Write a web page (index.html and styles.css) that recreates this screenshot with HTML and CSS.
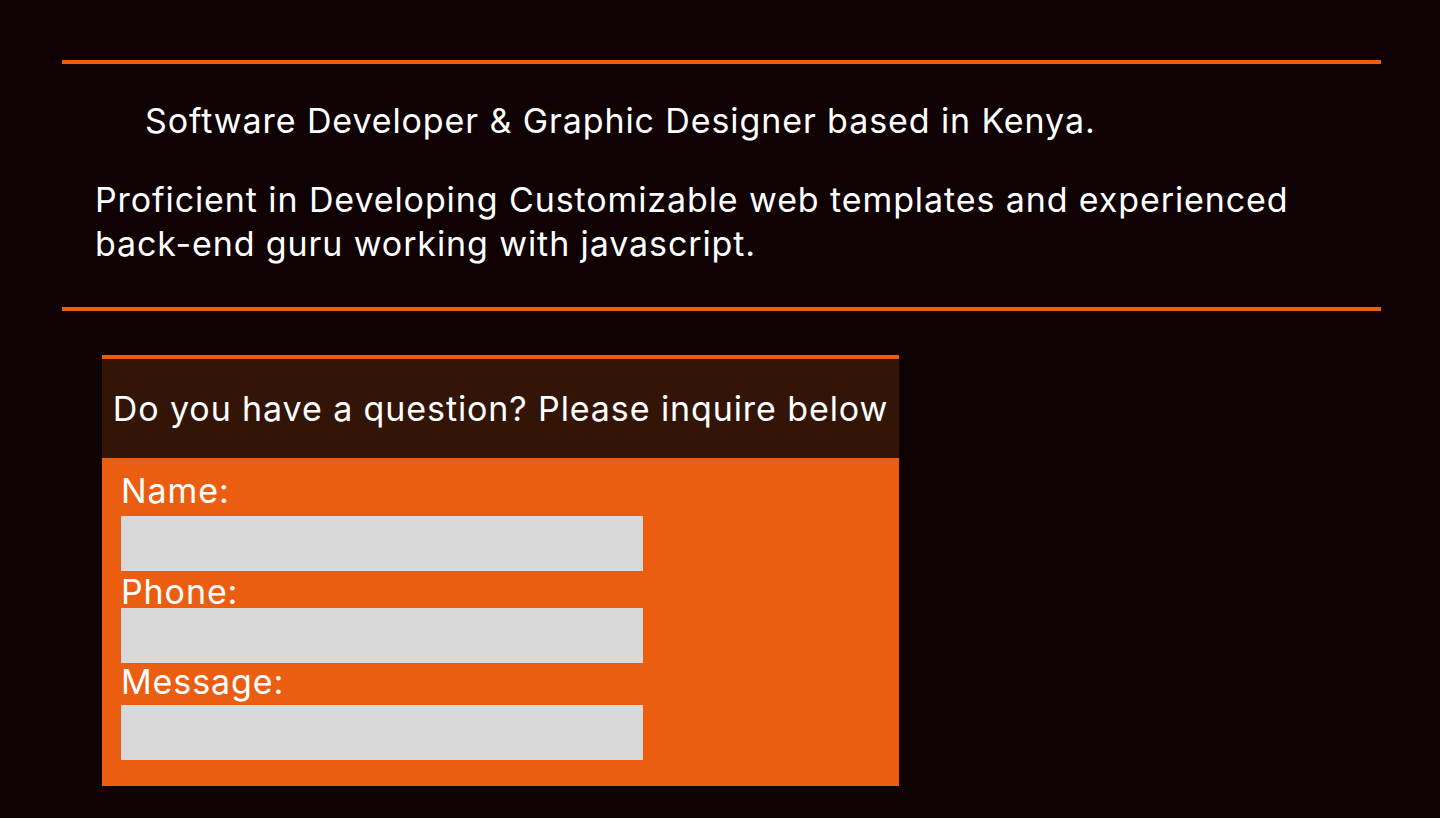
FILE: index.html
```html
<!DOCTYPE html>
<html lang="en">
<head>
<meta charset="utf-8">
<title>Portfolio</title>
<link rel="stylesheet" href="styles.css">
</head>
<body>
<main class="page">
  <hr class="rule">
  <section class="intro">
    <p class="tagline">Software Developer &amp; Graphic Designer based in Kenya.</p>
    <p class="bio">Proficient in Developing Customizable web templates and experienced back-end guru working with javascript.</p>
  </section>
  <hr class="rule">
  <form class="inquiry">
    <h2 class="inquiry-title">Do you have a question? Please inquire below</h2>
    <div class="inquiry-body">
      <div class="field field-name">
        <label class="field-label" for="name">Name:</label>
        <input class="field-input" id="name" type="text">
      </div>
      <div class="field field-phone">
        <label class="field-label" for="phone">Phone:</label>
        <input class="field-input" id="phone" type="text">
      </div>
      <div class="field field-message">
        <label class="field-label" for="message">Message:</label>
        <input class="field-input" id="message" type="text">
      </div>
    </div>
  </form>
</main>
</body>
</html>
```
FILE: styles.css
```css
* { box-sizing: border-box; }
html, body {
  margin: 0;
  padding: 0;
  background: #100202;
  color: #ffffff;
  font-family: Inter, "Noto Sans", sans-serif;
}
.page {
  padding: 60px 59px 0 62px;
  min-height: 818px;
}
.rule {
  margin: 0;
  border: 0;
  height: 4px;
  background: #eb5e12;
}
.intro {
  padding: 35px 0 41px;
}
.tagline,
.bio,
.inquiry-title,
.field-label {
  font-size: 34px;
  letter-spacing: 0.9px;
  font-weight: 400;
}
.tagline {
  margin: 0 0 35px 83px;
  line-height: 44px;
}
.bio {
  margin: 0 0 0 33px;
  line-height: 44px;
}
.inquiry {
  margin: 44px 0 0 40px;
  width: 797px;
  border-top: 4px solid #eb5e12;
}
.inquiry-title {
  margin: 0;
  height: 99px;
  display: flex;
  align-items: center;
  justify-content: center;
  background: #331507;
  white-space: nowrap;
}
.inquiry-body {
  background: #eb5e12;
  padding: 14px 19px 26px;
}
.field-label {
  display: block;
  line-height: 38px;
}
.field-input {
  display: block;
  width: 522px;
  height: 55px;
  border: 0;
  margin: 0;
  padding: 0 10px;
  background: #d9d9d9;
  font: inherit;
}
.field-name .field-input { margin-top: 6px; }
.field-phone .field-label { margin-top: 2px; }
.field-phone .field-input { margin-top: -3px; }
.field-message .field-input { margin-top: 4px; }
```
